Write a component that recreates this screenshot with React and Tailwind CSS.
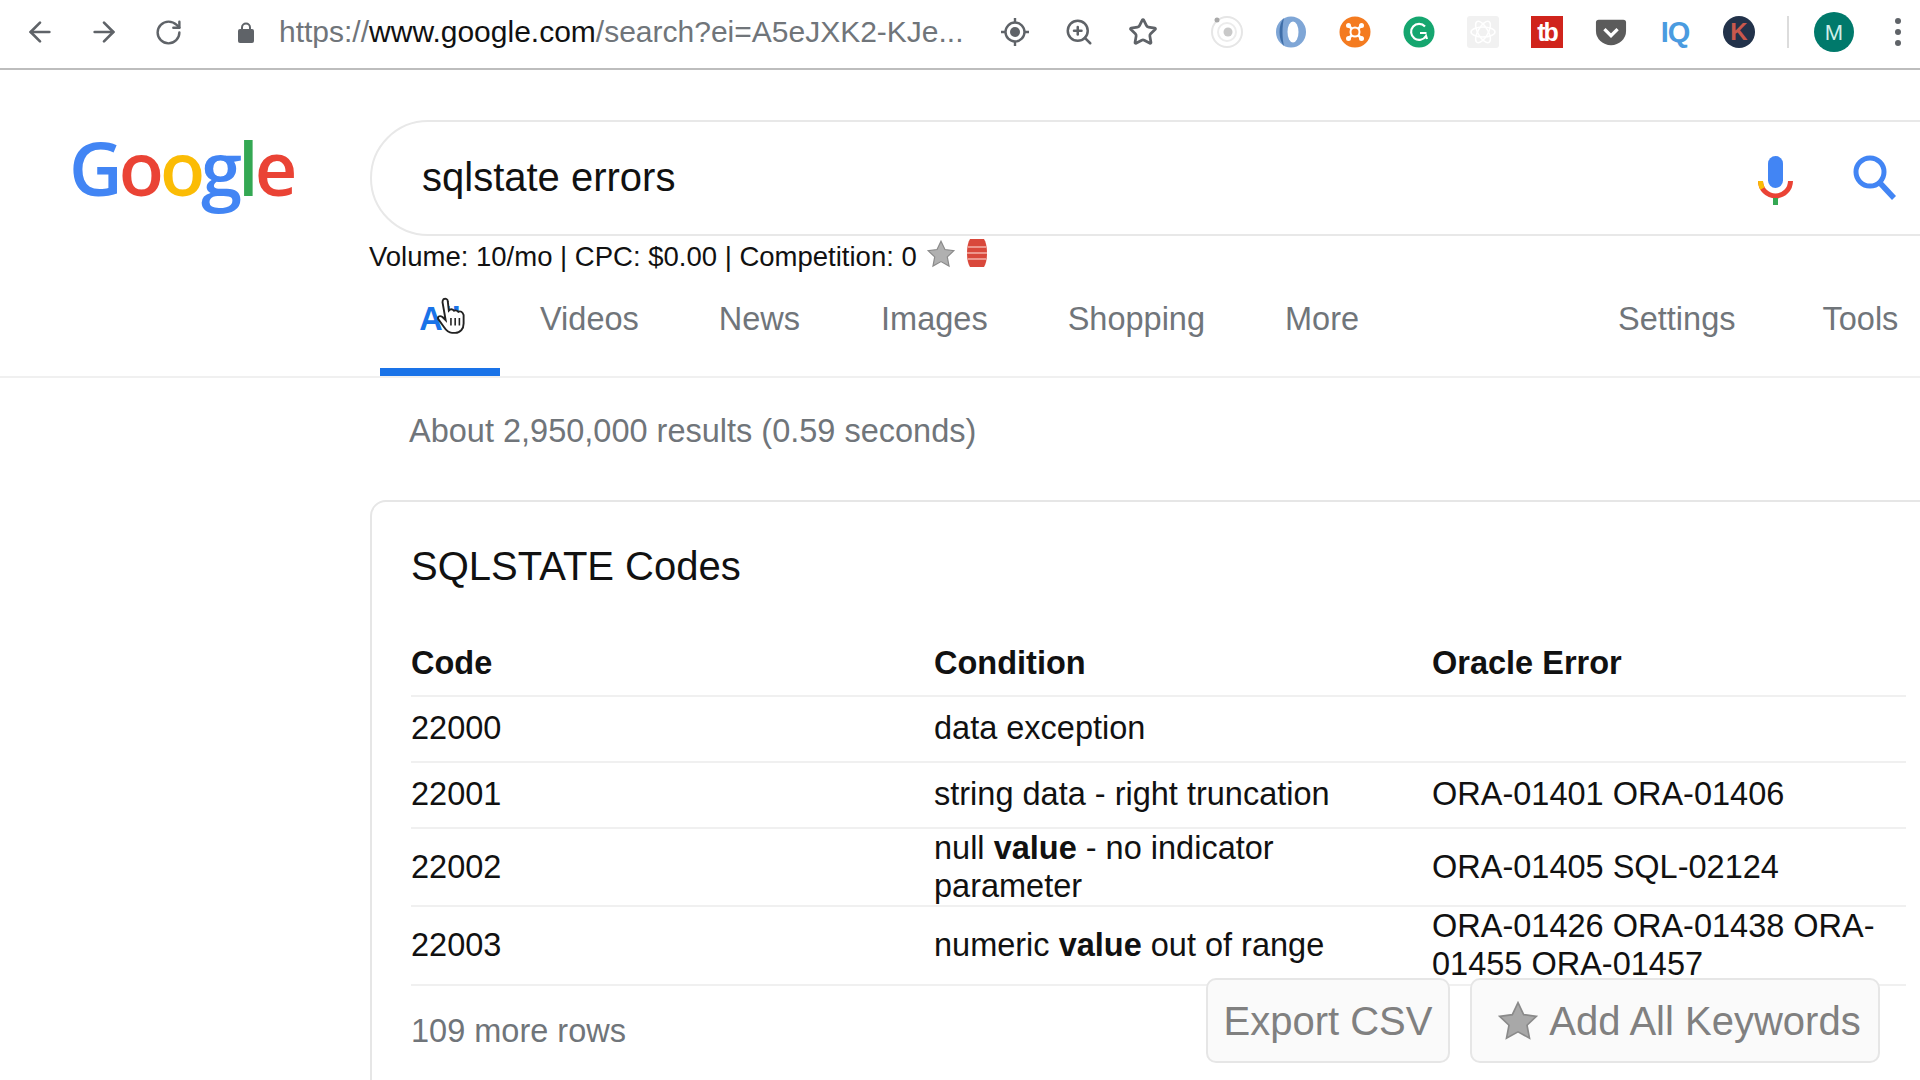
import { ArrowLeft, ArrowRight, RotateCw, ZoomIn, Star } from 'lucide-react';

const SANS = 'font-["Liberation_Sans",Arial,sans-serif]';

const TABS_LEFT = [
  { label: 'Videos', className: 'ml-[40px]' },
  { label: 'News', className: 'ml-[80px]' },
  { label: 'Images', className: 'ml-[81px]' },
  { label: 'Shopping', className: 'ml-[80px]' },
  { label: 'More', className: 'ml-[80px]' },
];

const ROWS = [
  { code: '22000', condition: 'data exception', oracle: '', height: 'h-[66px]' },
  { code: '22001', condition: 'string data - right truncation', oracle: 'ORA-01401 ORA-01406', height: 'h-[66px]' },
  {
    code: '22002',
    condition: (
      <>
        null <b>value</b> - no indicator parameter
      </>
    ),
    oracle: 'ORA-01405 SQL-02124',
    height: 'h-[78px]',
  },
  {
    code: '22003',
    condition: (
      <>
        numeric <b>value</b> out of range
      </>
    ),
    oracle: 'ORA-01426 ORA-01438 ORA-01455 ORA-01457',
    height: 'h-[79px]',
  },
];

const TargetIcon = () => (
  <svg width="30" height="30" viewBox="0 0 30 30" fill="none" stroke="#5f6368" strokeWidth="2.4">
    <circle cx="15" cy="15" r="9.5" />
    <circle cx="15" cy="15" r="5" fill="#5f6368" stroke="none" />
    <path d="M15 1v4M15 25v4M1 15h4M25 15h4" />
  </svg>
);

const LockIcon = () => (
  <svg width="18" height="22" viewBox="0 0 18 22">
    <path d="M5 9V6.500a4 4 0 0 1 8 0V9" fill="none" stroke="#5f6368" strokeWidth="2" />
    <rect x="1" y="8" width="16" height="14" rx="2" fill="#5f6368" />
  </svg>
);

const OrbitIcon = () => (
  <svg width="32" height="32" viewBox="0 0 32 32" fill="none">
    <circle cx="16" cy="16" r="15" stroke="#e6e6e6" strokeWidth="2" />
    <circle cx="16" cy="16" r="9" stroke="#ececec" strokeWidth="2" />
    <circle cx="17" cy="16" r="4.500" fill="#c9c9c9" />
    <circle cx="6" cy="4" r="2.500" fill="#a8a8a8" />
  </svg>
);

const RingIcon = () => (
  <svg width="32" height="32" viewBox="0 0 32 32">
    <ellipse cx="16" cy="16" rx="15" ry="15.500" fill="#7fa6d6" />
    <ellipse cx="18" cy="16" rx="5.500" ry="10.500" fill="#fff" />
    <path d="M9 2C3 8 3 24 9 30c-2-8-2-20 0-28z" fill="#3f6ea8" />
  </svg>
);

const OrangeIcon = () => (
  <svg width="32" height="32" viewBox="0 0 32 32">
    <circle cx="16" cy="16" r="15.500" fill="#f47b20" />
    <path d="M10 10l12 12M22 10L10 22" stroke="#fff" strokeWidth="2.500" />
    <circle cx="16" cy="16" r="4.500" fill="#f47b20" stroke="#fff" strokeWidth="2" />
    <circle cx="9.500" cy="9.500" r="2.500" fill="#fff" />
    <circle cx="22.500" cy="9.500" r="2.500" fill="#fff" />
    <circle cx="9.500" cy="22.500" r="2.500" fill="#fff" />
    <circle cx="22.500" cy="22.500" r="2.500" fill="#fff" />
  </svg>
);

const GrammarlyIcon = () => (
  <svg width="32" height="32" viewBox="0 0 32 32" fill="none">
    <circle cx="16" cy="16" r="15.500" fill="#15a66f" />
    <path d="M22 10.500a8 8 0 1 0 1 9.500l1 3M17 17h6.500" stroke="#fff" strokeWidth="2.200" />
  </svg>
);

const ReactIcon = () => (
  <div className="flex h-8 w-8 items-center justify-center rounded-[3px] bg-[#f1f1f1]">
    <svg width="28" height="28" viewBox="0 0 28 28" fill="none" stroke="#fff" strokeWidth="1.500">
      <ellipse cx="14" cy="14" rx="12" ry="5" />
      <ellipse cx="14" cy="14" rx="12" ry="5" transform="rotate(60 14 14)" />
      <ellipse cx="14" cy="14" rx="12" ry="5" transform="rotate(120 14 14)" />
    </svg>
  </div>
);

const TubeBuddyIcon = () => (
  <div className={`flex h-8 w-[34px] items-center justify-center bg-[#d0241c] text-[25px] font-bold leading-none tracking-[-2px] text-white ${SANS}`}>
    tb
  </div>
);

const PocketIcon = () => (
  <svg width="34" height="30" viewBox="0 0 34 30">
    <path d="M1 5a3 3 0 0 1 3-3h26a3 3 0 0 1 3 3v9a16 15 0 0 1-32 0z" fill="#5b5b5b" />
    <path d="M10 12l7 7 7-7" fill="none" stroke="#fff" strokeWidth="3.500" />
  </svg>
);

const AppIcon = ({ children, className = 'ml-[32px]' }) => (
  <div className={`flex w-[32px] shrink-0 items-center justify-center ${className}`}>{children}</div>
);

const Toolbar = () => (
  <div className={`flex h-[70px] items-center border-b-2 border-[#bdbdbd] bg-white pb-[4px] pl-[24px] ${SANS}`}>
    <ArrowLeft size={32} strokeWidth={2} className="shrink-0 text-[#5f6368]" />
    <ArrowRight size={32} strokeWidth={2} className="ml-[32px] shrink-0 text-[#5f6368]" />
    <RotateCw size={29} strokeWidth={2} className="ml-[34px] shrink-0 text-[#5f6368]" />
    <div className="ml-[54px] shrink-0">
      <LockIcon />
    </div>
    <div className="ml-[24px] w-[700px] shrink-0 whitespace-nowrap text-[30px] leading-none text-[#70757a]">
      https://<span className="text-[#111]">www.google.com</span>/search?ei=A5eJXK2-KJe...
    </div>
    <div className="ml-[21px] shrink-0">
      <TargetIcon />
    </div>
    <ZoomIn size={30} strokeWidth={2} className="ml-[34px] shrink-0 text-[#5f6368]" />
    <Star size={30} strokeWidth={2.2} className="ml-[34px] shrink-0 text-[#5f6368]" />
    <AppIcon className="ml-[53px]"><OrbitIcon /></AppIcon>
    <AppIcon><RingIcon /></AppIcon>
    <AppIcon><OrangeIcon /></AppIcon>
    <AppIcon><GrammarlyIcon /></AppIcon>
    <AppIcon><ReactIcon /></AppIcon>
    <AppIcon><TubeBuddyIcon /></AppIcon>
    <AppIcon><PocketIcon /></AppIcon>
    <AppIcon>
      <span className="text-[29px] font-bold leading-none tracking-[-1px] text-[#4a9be0]">IQ</span>
    </AppIcon>
    <AppIcon>
      <div className="flex h-8 w-8 items-center justify-center rounded-full bg-[#22324a] text-[24px] font-bold leading-none text-[#c9584c]">K</div>
    </AppIcon>
    <div className="ml-[32px] h-[32px] w-[2px] shrink-0 bg-[#dcdcdc]" />
    <div className="ml-[25px] flex h-10 w-10 shrink-0 items-center justify-center rounded-full bg-[#00796b] text-[22px] text-[#cfeee9]">M</div>
    <div className="ml-[41px] flex shrink-0 flex-col gap-[5px]">
      <div className="h-[6px] w-[6px] rounded-full bg-[#5f6368]" />
      <div className="h-[6px] w-[6px] rounded-full bg-[#5f6368]" />
      <div className="h-[6px] w-[6px] rounded-full bg-[#5f6368]" />
    </div>
  </div>
);

const GoogleLogo = () => (
  <div className='w-[300px] shrink-0 pl-[69px] pt-[11px] font-["Open_Sans",sans-serif] text-[74px] font-semibold leading-none tracking-[-4px]'>
    <span className="text-[#4285f4]">G</span>
    <span className="text-[#ea4335]">o</span>
    <span className="text-[#fbbc05]">o</span>
    <span className="text-[#4285f4]">g</span>
    <span className="text-[#34a853]">l</span>
    <span className="text-[#ea4335]">e</span>
  </div>
);

const MicIcon = () => (
  <svg width="35" height="49" viewBox="0 0 35 49" fill="none" className="mt-[4px] shrink-0">
    <rect x="10" y="0" width="15" height="32" rx="7.500" fill="#4285f4" />
    <path d="M2.500 25a15 15 0 0 0 30 0" stroke="#ea4335" strokeWidth="5" />
    <path d="M2.500 25a15 15 0 0 0 2 7.500" stroke="#fbbc05" strokeWidth="5" />
    <rect x="15" y="42" width="5" height="7" fill="#34a853" />
  </svg>
);

const SearchIcon = () => (
  <svg width="44" height="46" viewBox="0 0 44 46" fill="none" className="ml-[60px] shrink-0">
    <circle cx="17" cy="17" r="14" stroke="#4285f4" strokeWidth="5" />
    <path d="M27 28l14 15" stroke="#4285f4" strokeWidth="5.500" />
  </svg>
);

const SearchBox = () => (
  <div className="flex h-[116px] w-[1650px] shrink-0 items-center rounded-[58px] border-2 border-[#e8e8e8] pl-[50px]">
    <div className="w-[1336px] shrink-0 pb-[3px] text-[40px] leading-none text-[#111]">sqlstate errors</div>
    <MicIcon />
    <SearchIcon />
  </div>
);

const KeywordLine = () => (
  <div className="flex h-[43px] items-center pb-[2px] pl-[369px] text-[27.5px] leading-none text-[#111]">
    <span>Volume: 10/mo | CPC: $0.00 | Competition: 0</span>
    <svg width="30" height="28" viewBox="0 0 24 24" className="mb-[6px] ml-[9px]">
      <path d="M12 1l3.400 7.200 7.600 1-5.600 5.300 1.500 7.800-6.900-3.800-6.900 3.800 1.500-7.800L1 9.200l7.600-1z" fill="#b0b0b0" stroke="#8a8a8a" />
    </svg>
    <svg width="24" height="30" viewBox="0 0 24 30" className="mb-[8px] ml-[9px]">
      <path d="M5 1h14c2 3 3 8 3 14s-1 11-3 14H5c-2-3-3-8-3-14S3 4 5 1z" fill="#d9483b" />
      <path d="M3 9h18M2 15h20M3 21h18" stroke="#f3b0a8" strokeWidth="1.500" />
    </svg>
  </div>
);

const HandCursor = () => (
  <svg width="30" height="38" viewBox="0 0 28 36" className="absolute left-[18px] top-[-6px]">
    <path
      d="M6 2c2-1 4 0 4 2l1 9 1-1c2-1 3 0 4 1 2-1 3 0 4 1 2-1 4 0 5 3v8c0 5-3 9-8 9h-3c-4 0-6-3-8-6l-5-7c-1-2 1-4 4-2l3 3L5 5c0-1 0-2 1-3z"
      fill="#fff"
      stroke="#222"
      strokeWidth="1.800"
    />
    <path d="M13 20v7M17 20v7M21 20v7" stroke="#222" strokeWidth="1.500" />
  </svg>
);

const Tabs = () => (
  <div className="flex h-[77px] items-start whitespace-nowrap border-b-2 border-[#f0f0f0] pl-[380px] text-[32.5px] leading-none text-[#70757a]">
    <div className="relative flex h-[75px] w-[120px] shrink-0 justify-center border-b-[8px] border-[#1a73e8] pt-[2px] font-bold text-[#1a73e8]">
      <span className="relative">
        All
        <HandCursor />
      </span>
    </div>
    {TABS_LEFT.map((tab) => (
      <div key={tab.label} className={`shrink-0 pt-[2px] ${tab.className}`}>
        {tab.label}
      </div>
    ))}
    <div className="ml-[259px] shrink-0 pt-[2px]">Settings</div>
    <div className="ml-[87px] shrink-0 pt-[2px]">Tools</div>
  </div>
);

const ResultTable = () => (
  <div className="w-[1495px] text-[32.5px] leading-[38px] text-[#111]">
    <div className="grid h-[67px] grid-cols-[523px_498px_1fr] items-center border-b-2 border-[#f0f0f0] pt-[1px] font-bold">
      <div>Code</div>
      <div>Condition</div>
      <div>Oracle Error</div>
    </div>
    {ROWS.map((row) => (
      <div key={row.code} className={`grid grid-cols-[523px_498px_1fr] items-center border-b-2 border-[#f0f0f0] pb-[2px] ${row.height}`}>
        <div>{row.code}</div>
        <div className="w-[400px]">{row.condition}</div>
        <div>{row.oracle}</div>
      </div>
    ))}
  </div>
);

const SnippetCard = () => (
  <div className="mt-[50px] ml-[370px] h-[640px] w-[1700px] rounded-[16px] border-2 border-[#e6e6e6] pl-[39px]">
    <div className="pt-[41px] text-[40px] leading-[46px] text-[#111]">SQLSTATE Codes</div>
    <div className="mt-[41px]">
      <ResultTable />
    </div>
    <div className="pt-[26px] text-[32.5px] leading-[38px] text-[#70757a]">109 more rows</div>
  </div>
);

const OverlayButtons = () => (
  <div className="absolute left-[1206px] top-[978px] flex gap-[20px] text-[40px] leading-none text-[#808080]">
    <div className="flex h-[85px] w-[244px] items-center justify-center rounded-[10px] border-2 border-[#e6e6e6] bg-[#fafafa]">Export CSV</div>
    <div className="flex h-[85px] w-[410px] items-center justify-center rounded-[10px] border-2 border-[#e6e6e6] bg-[#fafafa] pl-[8px]">
      <svg width="42" height="40" viewBox="0 0 24 24" className="mr-[10px]">
        <path d="M12 1l3.400 7.200 7.600 1-5.600 5.300 1.500 7.800-6.900-3.800-6.900 3.800 1.500-7.800L1 9.200l7.600-1z" fill="#a8a8a8" stroke="#8a8a8a" />
      </svg>
      Add All Keywords
    </div>
  </div>
);

export default function App() {
  return (
    <div className={`relative h-[1080px] w-[1920px] overflow-hidden bg-white ${SANS}`}>
      <Toolbar />
      <div className="flex pt-[50px]">
        <GoogleLogo />
        <div className="ml-[70px]">
          <SearchBox />
        </div>
      </div>
      <KeywordLine />
      <div className="pt-[22px]">
        <Tabs />
      </div>
      <div className="pl-[409px] pt-[34px] text-[32.5px] leading-[38px] text-[#70757a]">About 2,950,000 results (0.59 seconds)</div>
      <SnippetCard />
      <OverlayButtons />
    </div>
  );
}
